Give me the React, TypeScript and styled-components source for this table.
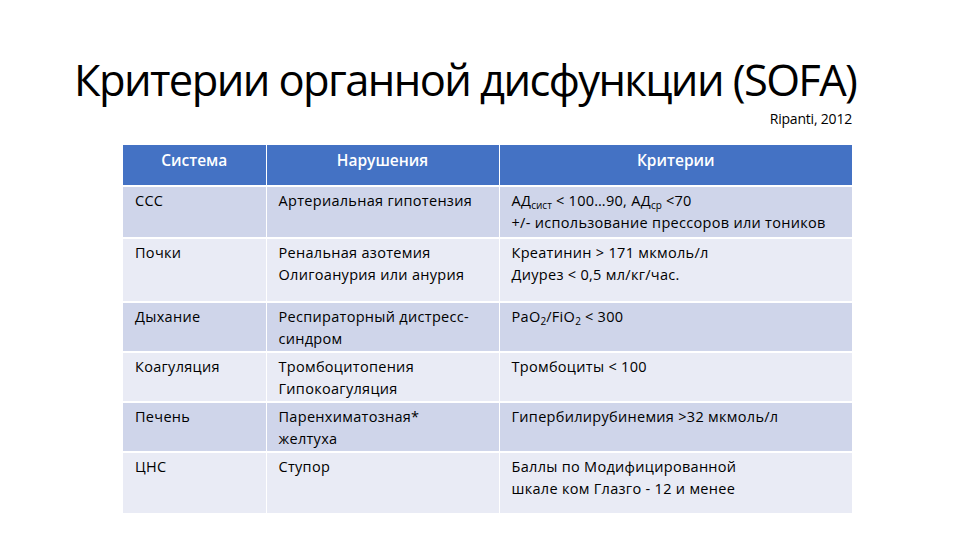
import React from 'react';
import styled, { createGlobalStyle } from 'styled-components';

const GlobalStyle = createGlobalStyle`
  html, body {
    margin: 0;
    padding: 0;
    background: #fff;
  }
  body {
    font-family: 'Open Sans', 'Noto Sans', sans-serif;
    color: #000;
  }
`;

const Slide = styled.div`
  width: 960px;
  height: 540px;
  overflow: hidden;
  background: #fff;
  display: flex;
  flex-direction: column;
  padding: 0 108px 0 123px;
  box-sizing: border-box;
`;

const Title = styled.h1`
  margin: 52px 0 0 -49px;
  font-family: 'Open Sans', sans-serif;
  font-weight: 500;
  font-size: 43.5px;
  line-height: 56px;
  letter-spacing: -1.6px;
  white-space: nowrap;
`;

const Source = styled.div`
  align-self: flex-end;
  margin-top: 2px;
  font-size: 14px;
  line-height: 18px;
  letter-spacing: -0.2px;
`;

const Table = styled.table`
  margin-top: 17px;
  width: 729px;
  border-collapse: collapse;
  table-layout: fixed;
  font-size: 14.5px;
  letter-spacing: 0.3px;
`;

const HeadCell = styled.th<{ $w: number }>`
  width: ${p => p.$w}px;
  height: 41px;
  box-sizing: border-box;
  background: #4472c4;
  color: #fff;
  font-weight: 600;
  font-size: 15.5px;
  letter-spacing: 0;
  text-align: center;
  vertical-align: top;
  padding: 4px 8px 0;
  border-right: 1px solid #fff;
  border-bottom: 2px solid #fff;
  &:last-child {
    border-right: none;
  }
`;

const Row = styled.tr<{ $odd: boolean; $h: number }>`
  height: ${p => p.$h}px;
  background: ${p => (p.$odd ? '#cfd5ea' : '#e9ebf5')};
`;

const Cell = styled.td`
  vertical-align: top;
  padding: 3px 12px 0;
  line-height: 22px;
  border-right: 1px solid #fff;
  border-bottom: 2px solid #fff;
  &:last-child {
    border-right: none;
  }
  sub {
    font-size: 10px;
    line-height: 0;
    vertical-align: -3px;
    letter-spacing: 0;
  }
`;

const rows: { sys: string; dis: React.ReactNode; crit: React.ReactNode; h: number }[] = [
  {
    sys: 'ССС',
    dis: 'Артериальная гипотензия',
    crit: (
      <>
        АД<sub>сист</sub> &lt; 100…90, АД<sub>ср</sub> &lt;70
        <br />
        +/- использование прессоров или тоников
      </>
    ),
    h: 52,
  },
  {
    sys: 'Почки',
    dis: (
      <>
        Ренальная азотемия
        <br />
        Олигоанурия или анурия
      </>
    ),
    crit: (
      <>
        Креатинин &gt; 171 мкмоль/л
        <br />
        Диурез &lt; 0,5 мл/кг/час.
      </>
    ),
    h: 64,
  },
  {
    sys: 'Дыхание',
    dis: (
      <>
        Респираторный дистресс-
        <br />
        синдром
      </>
    ),
    crit: (
      <>
        PaO<sub>2</sub>/FiO<sub>2</sub> &lt; 300
      </>
    ),
    h: 50,
  },
  {
    sys: 'Коагуляция',
    dis: (
      <>
        Тромбоцитопения
        <br />
        Гипокоагуляция
      </>
    ),
    crit: 'Тромбоциты < 100',
    h: 50,
  },
  {
    sys: 'Печень',
    dis: (
      <>
        Паренхиматозная*
        <br />
        желтуха
      </>
    ),
    crit: 'Гипербилирубинемия >32 мкмоль/л',
    h: 50,
  },
  {
    sys: 'ЦНС',
    dis: 'Ступор',
    crit: (
      <>
        Баллы по Модифицированной
        <br />
        шкале ком Глазго - 12 и менее
      </>
    ),
    h: 62,
  },
];

export default function App() {
  return (
    <Slide>
      <GlobalStyle />
      <Title>Критерии органной дисфункции (SOFA)</Title>
      <Source>Ripanti, 2012</Source>
      <Table>
        <thead>
          <tr>
            <HeadCell $w={143}>Система</HeadCell>
            <HeadCell $w={233}>Нарушения</HeadCell>
            <HeadCell $w={353}>Критерии</HeadCell>
          </tr>
        </thead>
        <tbody>
          {rows.map((r, i) => (
            <Row key={r.sys} $odd={i % 2 === 0} $h={r.h}>
              <Cell>{r.sys}</Cell>
              <Cell>{r.dis}</Cell>
              <Cell>{r.crit}</Cell>
            </Row>
          ))}
        </tbody>
      </Table>
    </Slide>
  );
}
